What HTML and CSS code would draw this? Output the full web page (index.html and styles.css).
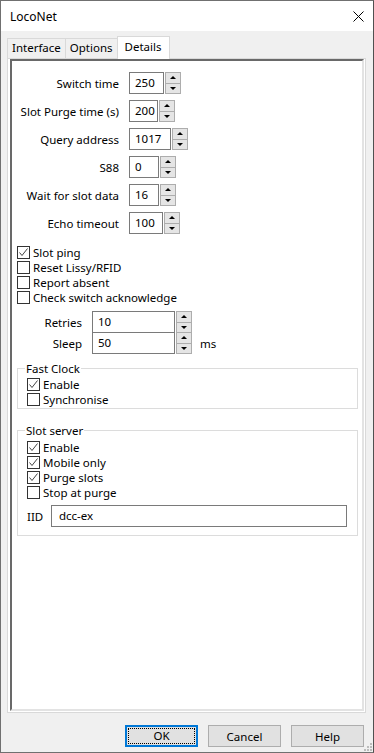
FILE: index.html
```html
<!DOCTYPE html>
<html lang="en">
<head>
    <meta charset="UTF-8">
    <title>LocoNet</title>
    <link rel="stylesheet" href="styles.css">
</head>
<body>
<div class="window">
    <div class="titlebar">
        <span class="title">LocoNet</span>
        <svg class="close" width="11" height="11" viewBox="0 0 11 11"><path d="M0.5 0.5L10.5 10.5M10.5 0.5L0.5 10.5" stroke="#000" stroke-width="1" fill="none"/></svg>
    </div>
    <div class="tabs">
        <div class="tab">Interface</div>
        <div class="tab">Options</div>
        <div class="tab active">Details</div>
    </div>
    <div class="panel">
        <div class="scrollbox">
            <div class="fields">
                <div class="row">
                    <label class="lbl">Switch time</label>
                    <div class="spin"><div class="edit w35">250</div><div class="arrows"><span class="up"></span><span class="down"></span></div></div>
                </div>
                <div class="row">
                    <label class="lbl">Slot Purge time (s)</label>
                    <div class="spin"><div class="edit w29">200</div><div class="arrows"><span class="up"></span><span class="down"></span></div></div>
                </div>
                <div class="row">
                    <label class="lbl">Query address</label>
                    <div class="spin"><div class="edit w42">1017</div><div class="arrows"><span class="up"></span><span class="down"></span></div></div>
                </div>
                <div class="row">
                    <label class="lbl">S88</label>
                    <div class="spin"><div class="edit w30">0</div><div class="arrows"><span class="up"></span><span class="down"></span></div></div>
                </div>
                <div class="row">
                    <label class="lbl">Wait for slot data</label>
                    <div class="spin"><div class="edit w30">16</div><div class="arrows"><span class="up"></span><span class="down"></span></div></div>
                </div>
                <div class="row">
                    <label class="lbl">Echo timeout</label>
                    <div class="spin"><div class="edit w34">100</div><div class="arrows"><span class="up"></span><span class="down"></span></div></div>
                </div>
            </div>

            <div class="checks">
                <div class="check on"><span class="box"></span>Slot ping</div>
                <div class="check"><span class="box"></span>Reset Lissy/RFID</div>
                <div class="check"><span class="box"></span>Report absent</div>
                <div class="check"><span class="box"></span>Check switch acknowledge</div>
            </div>

            <div class="retry">
                <div class="row tight">
                    <label class="lbl small">Retries</label>
                    <div class="spin"><div class="edit w83">10</div><div class="arrows"><span class="up"></span><span class="down"></span></div></div>
                </div>
                <div class="row tight second">
                    <label class="lbl small">Sleep</label>
                    <div class="spin"><div class="edit w83">50</div><div class="arrows"><span class="up"></span><span class="down"></span></div></div>
                    <span class="unit">ms</span>
                </div>
            </div>

            <fieldset class="group">
                <legend>Fast Clock</legend>
                <div class="check on"><span class="box"></span>Enable</div>
                <div class="check"><span class="box"></span>Synchronise</div>
            </fieldset>

            <fieldset class="group slots">
                <legend>Slot server</legend>
                <div class="check on"><span class="box"></span>Enable</div>
                <div class="check on"><span class="box"></span>Mobile only</div>
                <div class="check on"><span class="box"></span>Purge slots</div>
                <div class="check"><span class="box"></span>Stop at purge</div>
                <div class="iid">
                    <label>IID</label>
                    <div class="edit wide">dcc-ex</div>
                </div>
            </fieldset>
        </div>
    </div>
    <div class="footer">
        <button class="btn default"><span>OK</span></button>
        <button class="btn">Cancel</button>
        <button class="btn">Help</button>
    </div>
    <svg class="grip" width="10" height="10" viewBox="0 0 10 10">
        <rect x="8" y="2" width="2" height="2" fill="#bcbcbc"/>
        <rect x="5" y="5" width="2" height="2" fill="#bcbcbc"/>
        <rect x="8" y="5" width="2" height="2" fill="#bcbcbc"/>
        <rect x="2" y="8" width="2" height="2" fill="#bcbcbc"/>
        <rect x="5" y="8" width="2" height="2" fill="#bcbcbc"/>
        <rect x="8" y="8" width="2" height="2" fill="#bcbcbc"/>
    </svg>
</div>
</body>
</html>
```

FILE: styles.css
```css
body {
    margin: 0;
    font-family: "Noto Sans", Arial, sans-serif;
    font-size: 11.5px;
    line-height: 15px;
    color: #000;
    background: #f0f0f0;
}
.window {
    position: relative;
    box-sizing: border-box;
    width: 374px;
    height: 753px;
    border: 1px solid #707070;
    border-right-color: #505050;
    background: #f0f0f0;
}
.titlebar {
    height: 30px;
    background: #fff;
    display: flex;
    align-items: center;
    justify-content: space-between;
    padding: 0 9px 0 9px;
}
.title {
    font-size: 12px;
}
.close {
    margin-top: 1px;
}
.tabs {
    display: flex;
    align-items: flex-end;
    height: 22px;
    margin: 5px 0 0 6px;
}
.tab {
    box-sizing: border-box;
    height: 20px;
    line-height: 18px;
    padding: 0 4px;
    border: 1px solid #d9d9d9;
    border-bottom: none;
    margin-right: -1px;
    background: #f0f0f0;
}
.tab.active {
    position: relative;
    z-index: 1;
    height: 23px;
    margin-bottom: -1px;
    line-height: 20px;
    padding: 0 7px;
    background: #fff;
}
.panel {
    box-sizing: border-box;
    height: 655px;
    margin: 0 7px 0 6px;
    border: 1px solid #d9d9d9;
    background: #fff;
    padding: 0 1px 1px 2px;
}
.scrollbox {
    box-sizing: border-box;
    height: 100%;
    border: 2px solid;
    border-color: #696969 #e3e3e3 #e3e3e3 #696969;
    padding: 11px 4px 0 5px;
}
.row {
    display: flex;
    align-items: center;
    height: 22px;
    margin-bottom: 6px;
}
.lbl {
    width: 102px;
    margin-right: 10px;
    text-align: right;
    white-space: nowrap;
}
.lbl.small {
    width: 65px;
}
.spin {
    display: flex;
    height: 22px;
}
.edit {
    box-sizing: border-box;
    height: 22px;
    border: 1px solid #7a7a7a;
    padding: 0 0 0 5px;
    line-height: 20px;
    background: #fff;
}
.w29 { width: 29px; }
.w30 { width: 30px; }
.w34 { width: 34px; }
.w35 { width: 35px; }
.w42 { width: 42px; }
.w83 { width: 83px; }
.arrows {
    display: flex;
    flex-direction: column;
    width: 16px;
    margin-left: 1px;
}
.arrows span {
    flex: 1;
    box-sizing: border-box;
    border: 1px solid #adadad;
    background: #e5e5e5;
    display: flex;
    align-items: center;
    justify-content: center;
}
.arrows span + span {
    border-top: none;
}
.arrows span::after {
    content: "";
    width: 0;
    height: 0;
    border-left: 3px solid transparent;
    border-right: 3px solid transparent;
}
.arrows .up::after {
    border-bottom: 3px solid #000;
}
.arrows .down::after {
    border-top: 3px solid #000;
}
.checks {
    margin-top: 11px;
}
.check {
    display: flex;
    align-items: center;
    height: 15px;
    white-space: nowrap;
}
.box {
    box-sizing: border-box;
    width: 13px;
    height: 13px;
    border: 1px solid #333;
    background: #fff;
    margin-right: 3px;
    flex-shrink: 0;
}
.check.on .box {
    background: #fff url("data:image/svg+xml;utf8,<svg xmlns='http://www.w3.org/2000/svg' width='11' height='11'><path d='M1.5 5.5L4 8.5L9.5 1.5' stroke='%23444' stroke-width='1' fill='none'/></svg>") no-repeat center;
}
.retry {
    margin-top: 6px;
}
.row.tight {
    margin-bottom: 0;
}
.row.second {
    margin-top: -1px;
}
.unit {
    margin-left: 8px;
}
.group {
    margin: 7px 0 0 0;
    padding: 0 0 1px 9px;
    border: 1px solid #dcdcdc;
    min-width: 0;
}
.group legend {
    padding: 0 1px;
    margin-left: -2px;
    line-height: 15px;
}
.group .check:first-of-type {
    margin-top: 1px;
}
.slots {
    margin-top: 14px;
    padding-bottom: 8px;
}
.slots .check:first-of-type {
    margin-top: 2px;
}
.iid {
    display: flex;
    align-items: center;
    margin-top: 5px;
}
.iid label {
    width: 24px;
}
.edit.wide {
    width: 296px;
    padding-left: 7px;
}
.footer {
    display: flex;
    justify-content: flex-end;
    gap: 10px;
    padding: 12px 9px 0 0;
}
.btn {
    box-sizing: border-box;
    width: 73px;
    height: 22px;
    border: 1px solid #adadad;
    background: #e1e1e1;
    font-family: "Noto Sans", Arial, sans-serif;
    font-size: 11.5px;
    color: #000;
    padding: 0;
}
.btn.default {
    border: 2px solid #0078d7;
    padding: 1px;
}
.btn.default span {
    display: block;
    height: 100%;
    box-sizing: border-box;
    border: 1px dotted #000;
    line-height: 14px;
}
.grip {
    position: absolute;
    right: 1px;
    bottom: 1px;
}
```
